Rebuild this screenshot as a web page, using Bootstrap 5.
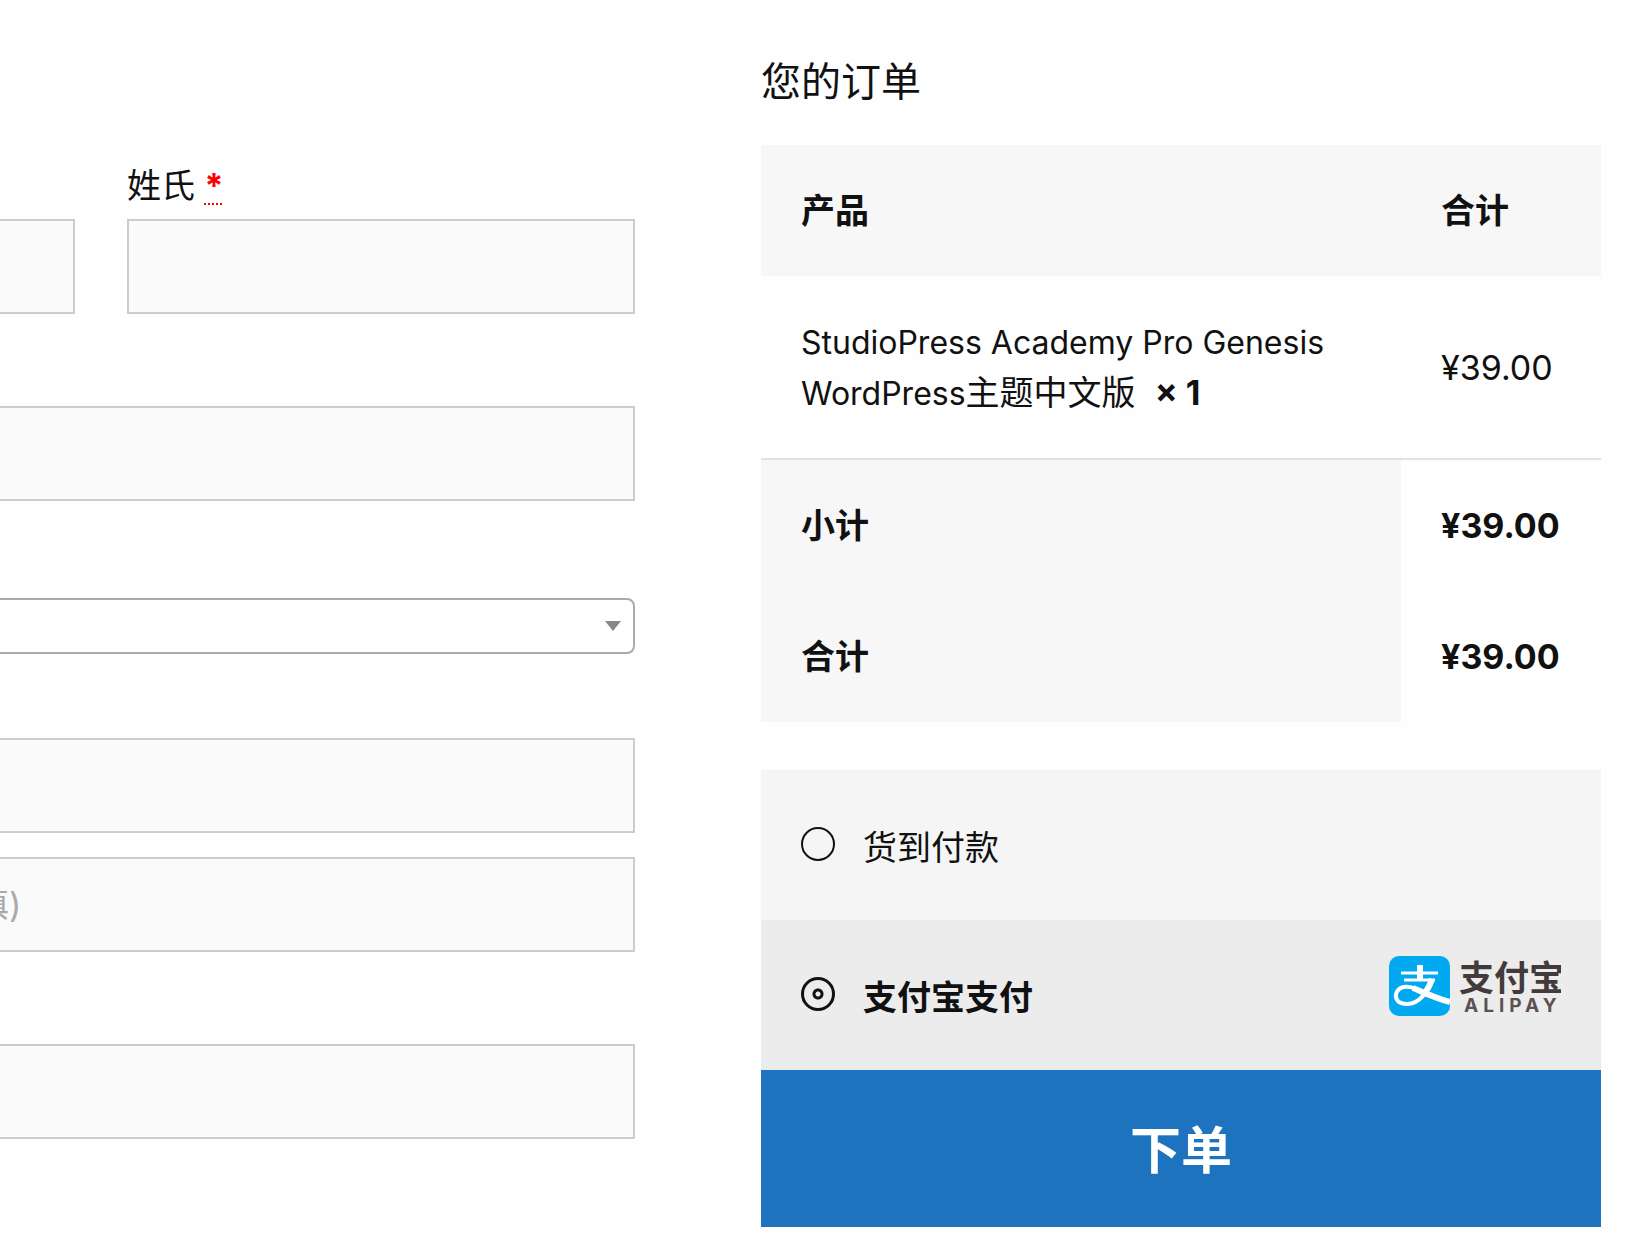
<!DOCTYPE html>
<html lang="zh-CN">
<head>
<meta charset="utf-8">
<meta name="viewport" content="width=device-width, initial-scale=1">
<title>结算</title>
<link href="https://cdn.jsdelivr.net/npm/bootstrap@5.3.0/dist/css/bootstrap.min.css" rel="stylesheet">
<style>
  body {
    background: #fefefe; color: #111; overflow-x: hidden;
    font-family: Inter, "Noto Sans CJK SC", sans-serif;
    font-size: 34px; line-height: 51px;
  }
  .checkout { margin-left: -433px; padding-right: 39px; }
  .billing { width: 52.5%; padding-top: 160px; }
  .order { width: 41.3%; padding-top: 56px; }
  .names { gap: 52px; }
  .billing .form-label { margin-bottom: 8px; }
  .field { margin-top: 92px; }
  .field-country { margin-top: 97px; }
  .field-address { margin-top: 84px; }
  .field-extra { margin-top: 24px; }
  .billing .form-control {
    height: 95px; padding: 20px 44px; border: 2px solid #ccc; border-radius: 0;
    background: #fafafa; font-size: 34px;
  }
  .billing .form-control::placeholder { color: #aaa; }
  .billing .form-select {
    height: 56px; padding: 0 40px 0 16px; border: 2px solid #aaa; border-radius: 8px;
    background-color: #fff; font-size: 34px; line-height: 51px;
    background-image: url("data:image/svg+xml,%3Csvg xmlns='http://www.w3.org/2000/svg' viewBox='0 0 16 10'%3E%3Cpath d='M0 0h16L8 10z' fill='%23888'/%3E%3C/svg%3E");
    background-size: 16px 10px; background-position: right 12px center;
  }
  abbr.required {
    color: #f00; font-weight: 700; cursor: help;
    text-decoration: underline dotted 2px; text-underline-offset: 5px;
  }
  .order h3 { font-size: 40px; line-height: 51px; font-weight: 400; margin-bottom: 38px; }
  .review { --bs-table-bg: transparent; --bs-table-color: #111; color: #111; table-layout: fixed; margin-bottom: 48px; }
  .review > :not(caption) > * > * { padding: 40px; border: 0; vertical-align: middle; }
  .review .col-total { width: 200px; }
  .review > thead th, .review > tfoot th { background: #f7f7f7; }
  .review > tbody td { border-bottom: 2px solid #e3e3e3; }
  .review > :not(caption) > * > .amount { padding-right: 0; }
  .latin { font-size: 32px; line-height: 1; }
  .method { height: 150px; padding: 4px 40px 0; background: #f5f5f5; cursor: pointer; }
  .method.chosen { background: #ececec; font-weight: 700; }
  .method input {
    appearance: none; flex: none; width: 34px; height: 34px; margin: 0 28px 7px 0;
    border: 2px solid #111; border-radius: 50%; background: transparent;
  }
  .method input:checked {
    border-width: 3px;
    background: radial-gradient(circle, transparent 2px, #111 3px, #111 5px, transparent 6px);
  }
  .alipay { width: 172px; height: 60px; margin-bottom: 22px; }
  .alipay .brand-cn { font: 700 35px "Noto Sans CJK SC", sans-serif; fill: #433b3b; }
  .alipay .brand-en { font: 700 19px Inter, sans-serif; letter-spacing: 5px; fill: #5a5252; }
  .place-order {
    height: 157px; padding: 6px 0 0; border: 0; border-radius: 0; background: #1e73be; color: #fff;
    font-size: 51px; font-weight: 700;
  }
  .place-order:hover { background: #185f9e; color: #fff; }
</style>
</head>
<body>
<form class="checkout d-flex justify-content-between align-items-start">
  <section class="billing">
    <div class="names d-flex align-items-end">
      <div class="flex-fill w-50">
        <input class="form-control" id="first" type="text" aria-label="名字">
      </div>
      <div class="flex-fill w-50">
        <label class="form-label d-block" for="last">姓氏 <abbr class="required" title="必填">*</abbr></label>
        <input class="form-control" id="last" type="text">
      </div>
    </div>
    <div class="field">
      <input class="form-control" id="company" type="text" aria-label="公司名称">
    </div>
    <div class="field-country">
      <select class="form-select" id="country" aria-label="国家/地区"><option value=""></option><option>中国</option></select>
    </div>
    <div class="field-address">
      <input class="form-control" id="street" type="text" aria-label="街道地址">
    </div>
    <div class="field-extra">
      <input class="form-control" id="unit" type="text" aria-label="公寓、套房、单元等" placeholder="公寓、套房、单元等 (选填)">
    </div>
    <div class="field">
      <input class="form-control" id="city" type="text" aria-label="市">
    </div>
  </section>

  <section class="order">
    <h3>您的订单</h3>
    <table class="table review">
      <colgroup><col><col class="col-total"></colgroup>
      <thead>
        <tr><th scope="col">产品</th><th scope="col" class="amount">合计</th></tr>
      </thead>
      <tbody>
        <tr>
          <td><span class="latin">StudioPress Academy Pro Genesis WordPress</span>主题中文版&nbsp; <strong>×&nbsp;1</strong></td>
          <td class="amount">¥39.00</td>
        </tr>
      </tbody>
      <tfoot>
        <tr><th scope="row">小计</th><td class="amount fw-bold">¥39.00</td></tr>
        <tr><th scope="row">合计</th><td class="amount fw-bold">¥39.00</td></tr>
      </tfoot>
    </table>

    <div class="payment">
      <label class="method d-flex align-items-center" for="cod">
        <input type="radio" name="pay" id="cod"><span>货到付款</span>
      </label>
      <label class="method chosen d-flex align-items-center" for="ali">
        <input type="radio" name="pay" id="ali" checked><span>支付宝支付</span>
        <svg class="alipay ms-auto" viewBox="0 0 172 60" role="img" aria-label="支付宝">
          <rect width="61" height="60" rx="10" fill="#00a9f0"/>
          <g fill="none" stroke="#fff">
            <path d="M31 9v16" stroke-width="6"/>
            <path d="M12 17h37M15 24h31" stroke-width="3"/>
            <path d="M43 23C40 34 31 48 18 48C9 48 6 43 7 38C9 30 19 29 27 33" stroke-width="4"/>
            <path d="M43 23C41 29 38 35 34 39" stroke-width="6"/>
            <path d="M24 32C34 36 46 42 61 46" stroke-width="6"/>
          </g>
          <text class="brand-cn" x="70" y="35">支付宝</text>
          <text class="brand-en" x="75" y="56">ALIPAY</text>
        </svg>
      </label>
      <button class="btn place-order w-100 d-block" type="submit">下单</button>
    </div>
  </section>
</form>
<script src="https://cdn.jsdelivr.net/npm/bootstrap@5.3.0/dist/js/bootstrap.bundle.min.js"></script>
</body>
</html>
